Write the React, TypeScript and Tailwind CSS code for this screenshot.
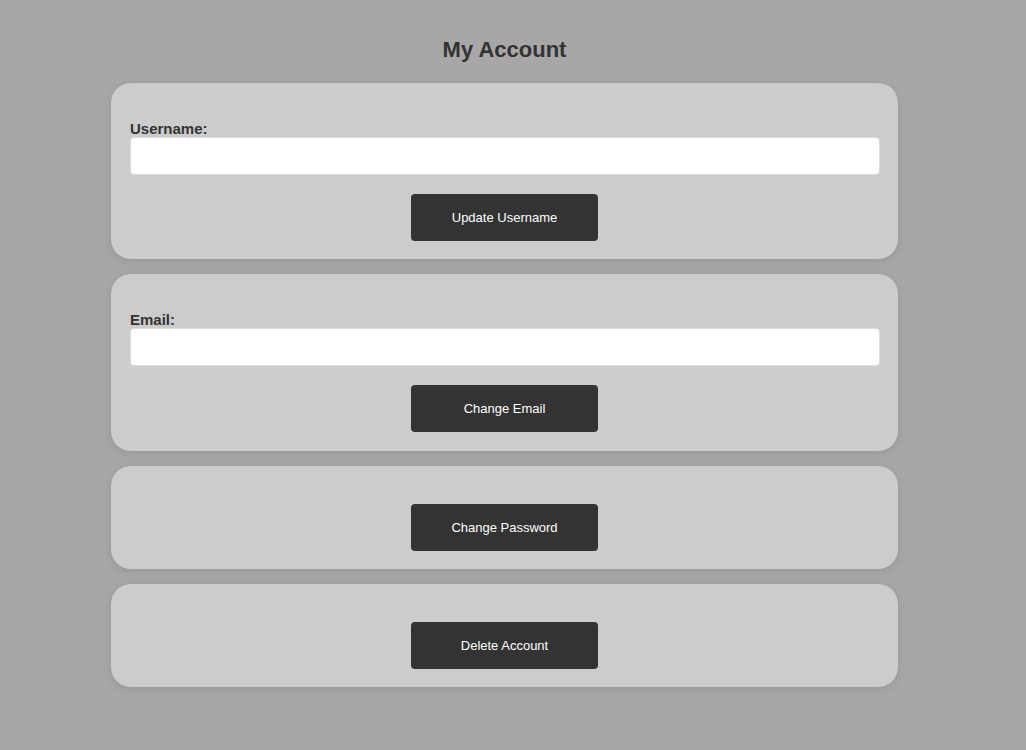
const Card = ({ children, pb = "pb-[18px]" }: { children: React.ReactNode; pb?: string }) => (
  <div className={`flex flex-col rounded-[20px] bg-[#cccccc] px-[19px] pt-[38px] shadow-[0_2px_10px_rgba(0,0,0,0.1)] ${pb}`}>
    {children}
  </div>
);

const Button = ({ label }: { label: string }) => (
  <button className="mx-auto h-[47px] w-[187px] rounded-[4px] bg-[#333333] text-[13px] text-white">
    {label}
  </button>
);

const Field = ({ label }: { label: string }) => (
  <>
    <label className="text-[15px] font-bold leading-4 text-[#333333]">{label}</label>
    <input
      type="text"
      className="mb-[19px] h-[38px] w-[calc(100%+1px)] rounded-[4px] border border-[#dddddd] bg-white px-2 outline-none"
    />
  </>
);

export default function App() {
  return (
    <div className="min-h-[750px] bg-[#a8a6a7] pr-[17px] font-['Liberation_Sans',Arial,sans-serif]">
      <div className="mx-auto flex w-[787px] flex-col gap-[15px] pt-[36px]">
        <h1 className="mb-[6px] pt-[1px] text-center text-[22px] font-bold leading-[25px] text-[#333333]">
          My Account
        </h1>
        <Card>
          <Field label="Username:" />
          <Button label="Update Username" />
        </Card>
        <Card pb="pb-[19px]">
          <Field label="Email:" />
          <Button label="Change Email" />
        </Card>
        <Card>
          <Button label="Change Password" />
        </Card>
        <Card>
          <Button label="Delete Account" />
        </Card>
      </div>
    </div>
  );
}
